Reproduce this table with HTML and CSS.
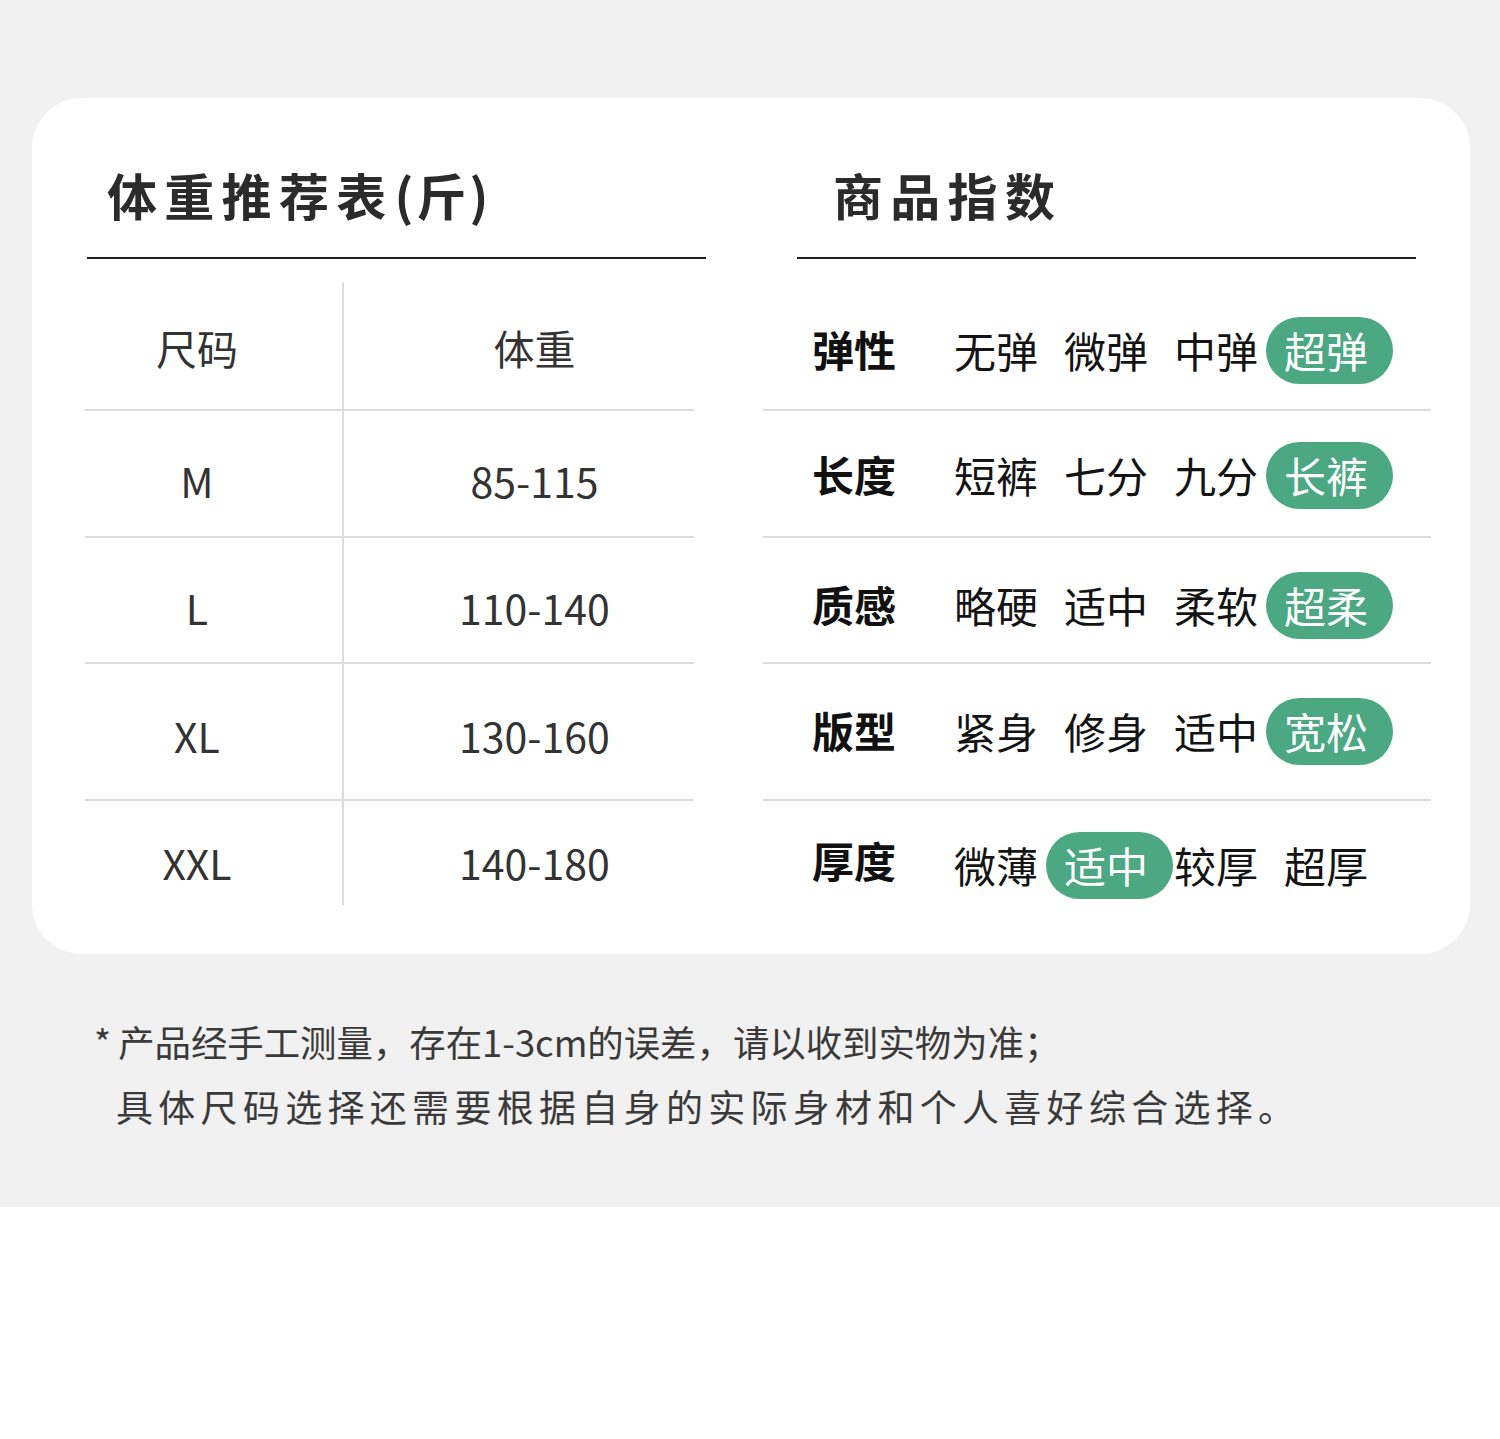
FILE: index.html
```html
<!DOCTYPE html>
<html lang="zh-CN">
<head>
<meta charset="utf-8">
<title>体重推荐表</title>
<link rel="stylesheet" href="styles.css">
</head>
<body>
<div class="page">
  <div class="card">
    <section class="left">
      <div class="head"><h2 class="title">体重推荐表<span class="unit">(斤)</span></h2></div>
      <div class="size-table">
        <div class="srow r1"><div class="c1">尺码</div><div class="c2">体重</div></div>
        <div class="srow r2"><div class="c1">M</div><div class="c2">85-115</div></div>
        <div class="srow r3"><div class="c1">L</div><div class="c2">110-140</div></div>
        <div class="srow r4"><div class="c1">XL</div><div class="c2">130-160</div></div>
        <div class="srow r5"><div class="c1">XXL</div><div class="c2">140-180</div></div>
      </div>
    </section>
    <section class="right">
      <div class="head head-r"><h2 class="title">商品指数</h2></div>
      <div class="idx-table">
        <div class="irow r1">
          <div class="label">弹性</div>
          <div class="opts"><span class="opt">无弹</span><span class="opt">微弹</span><span class="opt">中弹</span><span class="opt on">超弹</span></div>
        </div>
        <div class="irow r2">
          <div class="label">长度</div>
          <div class="opts"><span class="opt">短裤</span><span class="opt">七分</span><span class="opt">九分</span><span class="opt on">长裤</span></div>
        </div>
        <div class="irow r3">
          <div class="label">质感</div>
          <div class="opts"><span class="opt">略硬</span><span class="opt">适中</span><span class="opt">柔软</span><span class="opt on">超柔</span></div>
        </div>
        <div class="irow r4">
          <div class="label">版型</div>
          <div class="opts"><span class="opt">紧身</span><span class="opt">修身</span><span class="opt">适中</span><span class="opt on">宽松</span></div>
        </div>
        <div class="irow r5">
          <div class="label">厚度</div>
          <div class="opts"><span class="opt">微薄</span><span class="opt on">适中</span><span class="opt">较厚</span><span class="opt">超厚</span></div>
        </div>
      </div>
    </section>
  </div>
  <div class="note">
    <p class="l1">* 产品经手工测量，存在1-3cm的误差，请以收到实物为准；</p>
    <p class="l2">具体尺码选择还需要根据自身的实际身材和个人喜好综合选择。</p>
  </div>
</div>
</body>
</html>
```

FILE: styles.css
```css
html, body {
  margin: 0;
  padding: 0;
  background: #ffffff;
}
body {
  font-family: "Noto Sans CJK SC", "Noto Sans", sans-serif;
  color: #333333;
}
.page {
  background: #f1f1f1;
  height: 1207px;
  box-sizing: border-box;
  padding-top: 98px;
}
.card {
  margin-left: 32px;
  width: 1438px;
  height: 856px;
  background: #ffffff;
  border-radius: 50px;
  display: flex;
  box-sizing: border-box;
  padding-left: 55px;
}
.left {
  width: 619px;
}
.right {
  width: 619px;
  margin-left: 91px;
}
.head {
  height: 159px;
  border-bottom: 2px solid #1e1e1e;
  box-sizing: content-box;
  padding-left: 20px;
}
.head-r {
  padding-left: 36px;
}
.title {
  margin: 0;
  padding-top: 71px;
  font-size: 50px;
  line-height: 1;
  font-weight: 700;
  letter-spacing: 7.3px;
  color: #2b2b2b;
}
.title .unit {
  letter-spacing: 3px;
  margin-left: 1px;
}

/* size table */
.size-table {
  margin-top: 24px;
  margin-left: -2px;
  width: 609px;
}
.srow {
  display: flex;
  box-sizing: border-box;
  border-bottom: 2px solid #dcdcdc;
  font-size: 41px;
  line-height: 1;
  color: #333333;
}
.srow .c1 {
  width: 259px;
  box-sizing: border-box;
  padding-right: 33px;
  text-align: center;
  border-right: 2px solid #dcdcdc;
}
.srow .c2 {
  flex: 1;
  box-sizing: border-box;
  padding-left: 31px;
  text-align: center;
}
.srow > div { padding-top: 48px; }
.srow.r1 { height: 128px; }
.srow.r1 > div { padding-top: 44px; }
.srow.r2 { height: 127px; }
.srow.r2 > div { padding-top: 49px; }
.srow.r3 { height: 126px; }
.srow.r3 > div { padding-top: 49px; }
.srow.r4 { height: 137px; }
.srow.r4 > div { padding-top: 51px; }
.srow.r5 { height: 104px; border-bottom: none; }
.srow.r5 > div { padding-top: 41px; }

/* index table */
.idx-table {
  margin-top: 24px;
  margin-left: -34px;
  width: 668px;
}
.irow {
  display: flex;
  box-sizing: border-box;
  border-bottom: 2px solid #dcdcdc;
  padding-left: 49px;
  padding-top: 34px;
  align-items: flex-start;
}
.irow.r1 { height: 128px; }
.irow.r2 { height: 127px; padding-top: 31px; }
.irow.r3 { height: 126px; }
.irow.r4 { height: 137px; }
.irow.r5 { height: 104px; border-bottom: none; padding-top: 31px; }
.label {
  width: 142px;
  height: 67px;
  line-height: 63px;
  font-size: 42px;
  font-weight: 700;
  color: #111111;
}
.irow.r5 .label {
  line-height: 55px;
}
.opts {
  display: flex;
  gap: 26px;
}
.opt {
  display: block;
  width: 84px;
  height: 67px;
  line-height: 65px;
  font-size: 42px;
  color: #141414;
  white-space: nowrap;
}
.opt.on {
  background: #4ba883;
  color: #ffffff;
  border-radius: 34px;
  padding: 0 25px 0 18px;
  margin: 0 -25px 0 -18px;
}

/* note */
.note {
  margin-top: 55px;
  padding-left: 94px;
  color: #3a3a3a;
  font-size: 37px;
  line-height: 65px;
}
.note p {
  margin: 0;
}
.note .l1 {
  font-size: 36.4px;
  word-spacing: -1px;
}
.note .l2 {
  padding-left: 22px;
  letter-spacing: 5.3px;
}
```
